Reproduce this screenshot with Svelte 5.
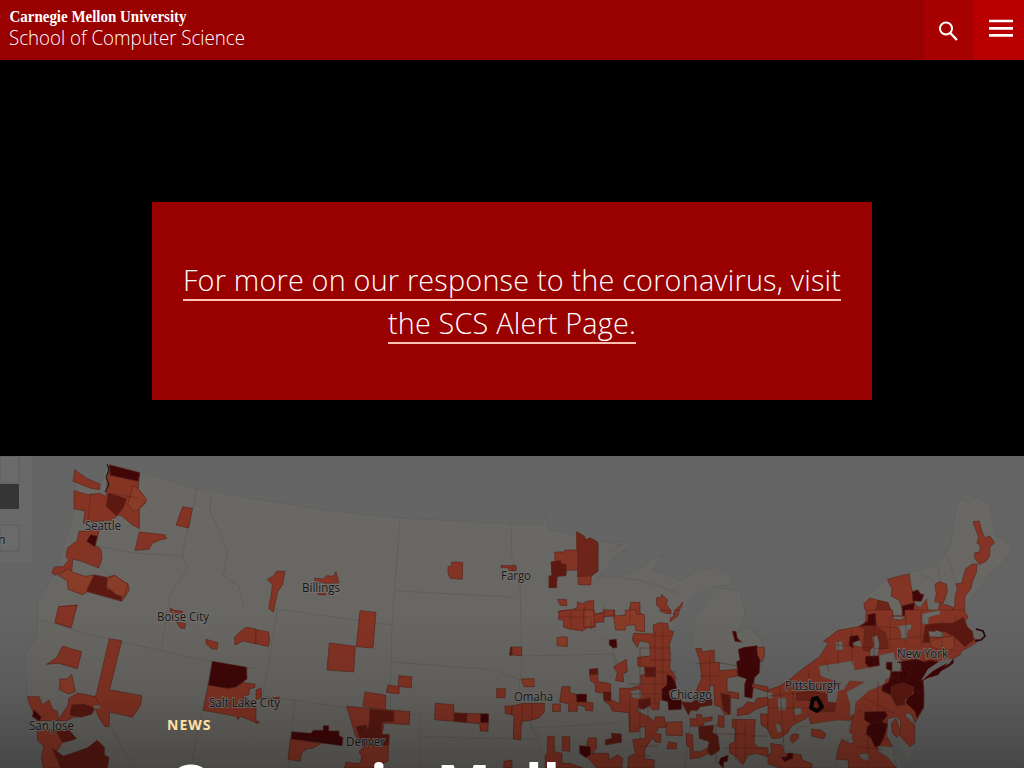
<script>
  const cities = [
    ['Seattle', 85, 530, 36], ['Boise City', 157, 621, 52], ['Billings', 302, 592, 38],
    ['Fargo', 501, 580, 30], ['San Jose', 29, 730, 45], ['Salt Lake City', 209, 707, 71],
    ['Denver', 346, 746, 39], ['Omaha', 514, 701, 39], ['Chicago', 670, 699, 42],
    ['Pittsburgh', 785, 690, 55], ['New York', 897, 658, 51]
  ];

  // Each tile has its own origin; shapes use thirds of a map unit.
  // Tones: a = light, b = medium, c = deep, d = darkest, w = land, s = water.
  const tiles = [
    { x: 0, y: 0, shapes: [
      ['b', '225,40 235,50 262,68 300,84 298,101 270,96 219,76'],
      ['b', '326,30 418,52 415,100 436,128 436,142 418,158 418,218 398,207 365,180 355,176 334,194 294,196 250,202 255,165 222,158 222,104 265,116 300,112 318,122'],
      ['c', '326,112 379,128 370,155 350,180 318,150'],
      ['a', '400,88 416,100 441,132 426,148 418,160 400,165 383,145'],
      ['d', '328,26 419,50 415,76 331,58'],
      ['b', '548,152 577,157 566,216 528,207'],
      ['b', '418,228 494,236 500,248 482,251 457,262 447,280 405,283'],
      ['b', '237,226 298,222 286,268 303,280 306,308 296,336 245,316 218,309 215,351 202,340 166,358 155,350 163,333 189,332 207,312 198,302 202,276 218,264 232,254'],
      ['d', '272,236 292,240 284,272 260,256'],
      ['a', '205,337 219,349 255,361 282,357 321,364 341,358 384,384 388,402 365,436 262,407 247,416 204,400 202,375 175,358'],
      ['c', '282,357 321,366 320,398 365,416 365,434 260,405'],
      ['a', '322,369 345,358 384,386 372,424 349,416 320,391'],
      ['b', '177,452 232,447 218,490 210,515 166,500'],
      ['b', '512,456 522,464 548,466 540,471 510,468']
    ] },
    { x: 0, y: 154, shapes: [
      ['b', '176,-10 230,-14 214,53 164,38'],
      ['b', '188,108 245,125 232,176 176,160 140,163 170,143'],
      ['a', '215,194 226,244 206,252 178,239 180,207 201,207'],
      ['b', '328,86 365,92 329,239 425,257 422,285 397,322 329,306 327,350 315,350 294,318 284,290 281,265 290,250'],
      ['b', '82,260 117,260 128,284 147,270 158,298 172,304 176,328 204,285 207,264 234,249 286,260 298,284 260,316 220,322 200,332 110,332 92,290'],
      ['c', '215,285 251,282 285,294 276,312 243,322 210,315'],
      ['w', '278,288 300,284 300,296 282,296'],
      ['d', '102,299 124,322 118,332 97,320'],
      ['b', '112,360 206,360 229,386 187,398 170,425 184,474 130,474 124,440 132,410 112,390'],
      ['c', '170,365 208,361 228,386 187,397'],
      ['c', '157,415 190,438 210,432 263,413 291,391 313,411 313,434 327,443 322,474 182,474'],
      ['b', '530,36 557,41 554,56 540,53'], ['b', '618,88 654,98 651,118 635,116 618,101'],
      ['b', '625,224 685,235 708,231 728,218 765,222 765,232 748,238 747,253 730,260 768,278 768,338 722,319 714,329 709,319 610,301'],
      ['d', '637,154 740,172 741,207 708,231 681,235 625,225'],
      ['b', '720,65 737,52 768,57 768,102 730,93 705,105 704,82'],
      ['b', '514,0 548,5 545,12 515,7']
    ] },
    { x: 256, y: 0, shapes: [
      ['b', '62,345 87,346 80,385 65,408 52,468 38,458 47,407 49,386 34,370 52,360'],
      ['b', '176,366 202,369 212,359 232,361 240,347 249,381 207,382 176,374'],
      ['b', '185,411 210,412 208,417 187,416'],
      ['b', '587,318 620,319 619,370 583,367 576,352 576,332 586,331'],
      ['b', '735,328 780,330 780,343 760,344 755,335 735,335']
    ] },
    { x: 256, y: 154, shapes: [
      ['b', '312,2 360,7 351,114 301,110'], ['b', '220,99 298,109 293,186 213,180'],
      ['b', '0,59 38,66 41,91 37,110 0,101'], ['b', '429,197 467,200 466,234 426,229'],
      ['b', '396,225 430,230 429,252 391,247'], ['b', '327,246 390,256 388,300 321,288'],
      ['b', '272,289 462,305 459,344 385,339 378,374 399,374 396,454 350,474 265,474 270,457 312,461 318,440 309,425 322,412 298,376'],
      ['c', '342,298 414,304 413,335 378,335 376,377 330,372 340,342'],
      ['c', '300,350 330,345 335,372 399,374 398,405 320,410'],
      ['d', '107,365 165,370 172,361 202,361 202,347 218,347 218,363 249,363 249,377 261,383 258,407 105,387'],
      ['b', '103,387 194,401 170,415 151,417 136,432 133,454 96,448'],
      ['b', '538,280 593,284 593,309 697,312 696,364 673,363 671,341 592,334 536,329'],
      ['c', '594,309 633,311 632,337 594,333'], ['d', '674,312 697,312 697,338 674,338'],
      ['b', '722,236 748,236 747,263 722,263'], ['b', '747,288 768,288 768,314 748,311'],
      ['b', '744,454 768,450 768,474 743,474'], ['c', '764,111 768,111 768,136 760,136'],
      ['b', '0,240 15,234 17,266 70,262 70,268 16,264 0,268'], ['b', '0,332 12,338 0,340']
    ] },
    { x: 512, y: 0, shapes: [
      ['b', '193,228 216,240 222,253 233,246 258,259 258,345 238,360 236,387 199,386 197,342 163,343 161,358 136,361 133,395 111,395 111,360 120,359 117,318 129,318 128,288 155,288 160,282 194,282'],
      ['m', '196,228 216,241 221,252 237,246 258,260 257,346 238,359 198,362'],
      ['c', '118,318 146,313 146,321 163,326 162,359 134,361 133,395 111,395 112,361 120,360'],
      ['b', '136,430 164,431 164,449 145,448'], ['b', '0,328 12,330 12,343 0,343'],
      ['b', '434,425 448,424 449,415 466,431 464,447 477,463 476,474 451,463 434,448'],
      ['b', '512,438 510,450 494,474 483,477 493,459 504,449'],
      ['b', '140,465 180,461 196,454 196,437 210,443 226,435 245,434 245,475 308,462 308,480 145,480'],
      ['b', '356,439 384,439 384,470 397,480 352,480']
    ] },
    { x: 512, y: 154, shapes: [
      ['b', '140,5 170,0 246,0 250,15 274,8 274,0 306,0 306,17 275,20 274,35 250,38 250,51 220,55 212,63 170,57 154,50 155,31 140,28'],
      ['a', '215,0 245,0 247,50 215,52'],
      ['a', '305,18 340,16 340,0 374,0 374,13 397,14 398,65 371,62 370,45 342,46 340,60 311,60'],
      ['a', '135,84 150,80 166,82 166,110 135,107'], ['b', '0,111 29,111 29,137 0,135'],
      ['a', '28,207 66,206 67,230 37,230'], ['d', '292,90 313,88 315,112 304,114 292,105'],
      ['b', '365,70 425,72 424,45 442,38 467,40 470,60 485,65 472,105 475,130 474,175 490,200 490,240 465,245 469,269 442,270 441,298 422,300 410,286 393,298 378,290 378,305 410,321 428,334 430,320 457,321 462,352 440,353 430,370 447,373 446,398 429,396 423,382 407,405 398,418 398,446 427,450 426,474 347,474 350,440 370,430 362,389 400,385 400,350 382,352 380,365 353,366 350,308 301,303 294,286 276,273 275,250 251,246 249,220 235,212 232,178 257,176 258,214 296,222 296,270 323,280 323,235 355,235 388,225 386,196 400,192 397,170 377,168 377,142 415,138 413,98 383,92 376,112 361,90'],
      ['w', '355,243 385,238 390,255 385,266 360,263'],
      ['d', '465,193 480,200 488,215 494,235 470,242 474,262 508,270 508,298 470,300 468,275 450,270 450,236 465,225'],
      ['c', '399,172 430,172 430,200 400,200'], ['c', '380,270 415,265 415,284 395,298 380,290'],
      ['c', '233,178 257,176 257,192 233,194'], ['c', '275,246 296,246 296,274 276,270'],
      ['b', '305,170 343,148 346,186 332,190 335,215 310,212 316,190'],
      ['b', '150,230 174,230 174,248 196,254 222,254 222,276 243,279 242,303 220,301 220,290 196,284 196,304 170,304 170,281 143,276'],
      ['d', '193,253 224,253 223,276 195,276'],
      ['b', '0,288 33,280 97,280 97,305 82,323 52,332 28,334 26,389 4,387 6,315 0,314'],
      ['a', '122,282 145,282 145,304 122,304'], ['b', '151,380 173,380 173,424 151,422'],
      ['b', '107,379 127,379 127,425 150,430 150,460 174,460 212,474 100,474 100,435 106,430'],
      ['b', '230,383 253,384 254,415 240,430 290,430 292,450 316,434 332,445 330,474 255,474 225,440 225,396'],
      ['d', '203,407 235,410 235,434 222,443 203,430'], ['c', '298,370 328,372 328,397 280,405 280,390 300,385'],
      ['a', '463,337 510,335 511,377 463,375'], ['b', '470,395 494,400 493,417 465,416'],
      ['b', '551,115 569,116 570,126 607,120 607,157 622,158 622,182 675,178 676,198 645,204 645,238 656,260 655,313 638,314 625,290 608,286 605,225 594,228 592,245 550,248 560,224 569,205 564,155'],
      ['d', '661,64 672,64 676,85 689,96 669,94'],
      ['d', '679,118 697,112 735,107 736,124 745,136 742,188 727,204 720,265 698,260 698,222 704,207 678,198 674,155 684,150'],
      ['a', '735,112 757,112 757,140 748,156 736,135'],
      ['b', '652,244 680,250 680,266 650,262'], ['b', '720,221 768,231 768,246 721,232'],
      ['c', '508,276 538,278 550,270 600,268 600,285 565,290 555,302 536,300 530,315 520,298'],
      ['c', '626,250 654,256 652,313 635,300'],
      ['b', '534,326 554,326 554,313 570,315 570,325 600,320 600,331 576,337 574,347 536,349'],
      ['b', '620,317 636,318 636,352 617,350'],
      ['b', '676,298 694,290 706,275 726,280 735,265 768,262 768,285 732,298 710,312 676,317'],
      ['b', '661,328 730,329 726,399 737,412 768,414 768,440 730,430 708,436 692,464 669,437 652,428 653,402 668,396 670,356 661,352'],
      ['b', '746,311 768,313 768,358 747,344'],
      ['c', '560,350 605,346 602,368 618,378 623,420 598,437 585,425 592,395 562,385'],
      ['b', '522,370 541,374 544,425 566,425 585,415 590,430 562,443 535,446 534,415 524,405'],
      ['d', '626,444 649,436 645,455 635,455 634,474 620,460'],
      ['b', '442,0 475,2 474,12 455,8'], ['b', '488,0 502,0 498,18 474,35 475,24 488,17']
    ] },
    { x: 768, y: 0, shapes: [
      ['b', '615,197 634,195 641,225 651,246 665,240 680,260 666,273 665,300 653,317 633,325 619,304 621,290 635,289 637,270 626,260 632,244'],
      ['b', '627,325 625,350 614,374 608,400 591,420 590,480 553,480 555,458 560,450 562,416 568,400 565,383 581,382 592,340 612,324'],
      ['b', '358,370 424,353 429,390 437,420 439,445 457,455 475,430 480,462 457,480 320,480 290,460 288,442 305,426 360,440 374,480 403,480 402,456 393,432 370,421 372,398'],
      ['m', '330,434 360,440 376,480 320,480'], ['d', '432,408 449,401 458,414 468,416 460,436 435,435'],
      ['d', '402,450 440,440 434,480 405,480'],
      ['b', '501,385 514,377 535,384 538,407 526,441 500,437 505,414'],
      ['b', '515,441 554,453 553,480 480,480 482,470 510,467']
    ] },
    { x: 768, y: 154, shapes: [
      ['b', '295,0 374,0 375,28 400,30 410,22 411,0 585,0 600,20 588,40 590,55 612,62 617,85 636,90 604,110 580,124 576,135 545,150 465,212 467,293 453,318 441,338 432,314 416,307 412,320 440,345 440,398 427,411 396,379 398,334 387,319 359,326 356,378 374,410 332,410 328,424 358,442 386,474 242,474 240,450 205,448 212,410 222,389 250,402 258,394 245,370 258,306 250,330 213,332 128,342 120,310 116,325 90,337 68,350 60,368 36,384 12,386 0,360 0,240 35,228 68,206 110,172 154,141 182,98 166,94 210,61 292,46'],
      ['w', '152,168 256,152 260,180 332,168 334,136 377,126 382,148 403,150 402,184 378,184 370,208 356,206 346,224 303,242 263,278 260,310 246,320 246,282 235,246 290,216 245,212 227,240 212,240 204,278 178,276 180,240 220,220 158,199'],
      ['w', '202,97 222,93 226,118 204,123'], ['w', '256,90 279,94 280,113 258,106'],
      ['w', '313,82 327,76 334,101 329,137 307,138 307,120 318,108'],
      ['w', '386,49 429,43 430,56 419,62 418,88 399,86 398,61'],
      ['w', '482,64 502,65 502,60 526,68 524,81 484,79'],
      ['w', '462,12 487,6 515,0 518,12 483,22 480,45 462,40'],
      ['w', '29,263 55,263 55,300 30,301'], ['w', '79,294 100,292 101,312 80,317'], ['w', '0,247 12,247 15,265 0,266'],
      ['w', '22,340 35,344 42,364 28,368'],
      ['m', '320,12 325,50 352,68 361,115 330,116 330,130 286,120 290,55 275,50'],
      ['w', '313,82 327,76 334,101 329,137 307,138 307,120 318,108'],
      ['d', '275,48 300,35 300,14 322,10 324,46'],
      ['d', '293,139 332,138 334,166 302,171 292,160'],
      ['d', '246,79 270,76 274,90 254,98 255,116 243,105'],
      ['d', '370,185 401,185 400,160 387,157 445,147 468,155 490,150 520,158 556,146 556,160 537,173 465,211 468,250 467,291 447,324 441,304 414,279 418,263 437,251 436,231 405,219 369,230 369,256 342,243 343,227 362,217'],
      ['d', '355,157 372,157 372,184 355,176'],
      ['c', '370,230 405,220 435,233 432,251 410,268 409,285 384,286 370,258'],
      ['d', '290,306 352,304 358,318 342,335 359,343 348,382 333,411 321,411 309,384 294,372 298,350 309,342 290,330'],
      ['m', '85,250 132,244 176,252 178,276 205,280 198,306 145,304 129,272 86,270'],
      ['c', '472,45 510,40 556,40 585,22 598,50 612,64 616,91 590,110 560,80 530,64 485,67 484,97 465,97'],
      ['a', '485,85 558,78 560,120 520,120 488,110'],
      ['w', '482,64 502,65 502,60 526,68 524,81 484,79'],
      ['s', '555,146 520,150 480,177 458,213 500,186 545,160'],
      ['b', '371,339 384,325 390,342 398,368 387,382 373,370'],
      ['w', '130,342 210,330 248,333 240,365 256,375 245,390 220,387 204,430 204,474 130,474 103,450 100,434 70,428 34,412 39,397 80,370 94,350 118,350'],
      ['b', '131,357 158,360 174,372 167,387 131,378'], ['b', '72,373 91,373 92,383 75,400 66,390'],
      ['b', '8,400 42,406 50,430 99,434 103,450 132,461 132,474 35,474 0,461 0,436 10,429'],
      ['w', '271,433 302,430 304,452 282,448'], ['w', '330,408 374,410 386,474 359,442 334,425'],
      ['d', '39,441 54,442 60,430 75,430 74,445 50,455']
    ] }
  ];
</script>

<div class="page">
  <header>
    <a class="brand" href="#home" aria-label="Carnegie Mellon University School of Computer Science">
      <svg width="270" height="60">
        <text class="cmu" x="9.5" y="22" textLength="177" lengthAdjust="spacingAndGlyphs">Carnegie Mellon University</text>
        <text class="scs" x="9" y="45" textLength="236" lengthAdjust="spacingAndGlyphs">School of Computer Science</text>
      </svg>
    </a>
    <button class="search" aria-label="Search">
      <svg width="50" height="60" fill="none" stroke="#fff"><circle cx="22" cy="28.5" r="6" stroke-width="2" /><path d="M26.3 33l6.6 7" stroke-width="2.5" /></svg>
    </button>
    <button class="menu" aria-label="Menu">
      <svg width="50" height="60"><path d="M15 21h24M15 28.3h24M15 35.4h24" stroke="#fff" stroke-width="2.7" /></svg>
    </button>
  </header>

  <section class="notice">
    <p><a href="#alert"><span>For more on our response to the coronavirus, visit</span><br /><span>the SCS Alert Page.</span></a></p>
  </section>

  <section class="hero">
    <svg class="map" viewBox="0 0 1024 312" aria-hidden="true">
      <defs>
        <linearGradient id="shade" x2="0" y2="1">
          <stop offset="0" stop-opacity="0" /><stop offset=".5" stop-opacity="0.01" /><stop offset=".75" stop-opacity=".1" /><stop offset="1" stop-opacity=".3" />
        </linearGradient>
      </defs>
      <rect class="s" width="1024" height="312" />
      <path d="M0 0H32V106H0Z" fill="#696969" />
      <path d="M0 0H19V27H0ZM0 69H19V95H0Z" fill="#6b6b6b" stroke="#5d5d5d" />
      <path d="M0 28H19V53H0Z" fill="#353535" />
      <text class="city" x="-2" y="88">n</text>
      <path class="land" d="M75 20L80 28 100 34 103 18 108 6 140 16 197 33 256 43 330 55 400 62 512 68 543 68 545 58 549 74 575 79 600 84 634 87 616 99 598 122 620 121 646 109 650 102 664 99 653 114 682 125 696 115 715 111 733 121 730 129 711 131 740 135 745 157 738 177 748 171 761 181 764 204 752 224 766 233 795 218 835 189 822 177 866 162 863 143 888 122 938 109 951 89 956 54 961 42 968 47 977 41 990 49 995 78 1013 92 1005 105 988 120 968 147 966 167 975 173 981 182 970 192 935 218 924 230 924 248 914 264 901 262 912 275 915 290 908 312H58L42 281 28 250 25 200 37 180 38 146 57 112 66 82 74 55Z" />
      <path class="s" d="M702 134L716 132 708 149 696 161 694 190 702 205 699 225 691 238 681 240 674 225 671 204 672 178 678 158 690 142 Z" />
      <path class="s" d="M890 263L899 262 897 280 910 312H902L890 290Z" />
      <path class="line" d="M197 33L182 100 188 111 170 139 161 195M211 37L210 55 228 96 223 120 239 130 244 151M97 90L135 97 182 100M37 163L90 179 212 206 256 213M110 232L95 240 132 310M212 206L191 312M268 152L392 169 400 62M278 150L263 240 390 258 392 170M295 244L288 312M396 135L512 141M392 206L485 213 500 216 520 224M420 256V312M390 258L420 259M420 281L540 283 530 267 544 300M512 68L511 98 520 129 522 210 518 238M522 200L612 198 630 226M534 272L615 267M591 172L612 190 620 225M938 109L941 130 948 150M948 101L958 135 965 142M690 268L685 312M620 122L640 124 670 134 680 138M750 171L762 185" />
      <path d="M638 92L650 85M600 85l22 4-12 6M940 128l-20-10" class="line" />
      {#each tiles as t}
        <g transform="translate({t.x} {t.y}) scale(.33333)">
          {#each t.shapes as [tone, points]}<polygon class={tone} {points} />{/each}
        </g>
      {/each}
      <path class="county" d="M107 37l32 5M91 37l-3 28M558 161h33v13M571 155v17M585 149v25M604 151v16M630 150v15M652 180h19M640 192h31M650 204h22M652 216h24M628 228h48M630 238h38M640 248h20M640 192v62M655 175v72M663 169v60M640 252v30M648 240v28M630 240v36M695 208l20-2 22 4M710 198v32M700 220h22M716 268v40M702 278h45M736 264v40M750 280h18M745 266v40M725 292h42M780 231l4 60M792 225l2 40M808 214l4 24M825 202l4 14M838 184v24M852 174v35M874 166v42M890 160v34M906 160v28M921 155v32M942 165v35M955 160v25M770 240l38-4M770 252h60M835 189l50 4M870 170l30 2M885 184l45-4M918 190l25-9M900 208l20 18M890 218l30 20M878 230l30 20M865 242l30 16M857 254l30 12M904 198l-10 42M915 202l-14 40M890 213l8 40M878 225v30M866 265l20 4M864 278l25 6M857 290l25 4M868 265v45M522 248v22M532 248v16M640 290h18M635 300h16" />
      <path d="M107 8l2 6-3 7 3 8-4 7" stroke="#101018" fill="none" />
      <path d="M813 243l4-1 2 3 3 6-5 4-6-3z" fill="none" stroke="#080404" stroke-width="4" stroke-linejoin="round" />
      <path d="M976 173l7 2 2 5-4 4-6 1" fill="none" stroke="#250707" stroke-width="1.7" />
      <path d="M947 207l-14 8-9 8 14-4z" fill="#410205" />
      {#each cities as [name, x, y, w]}
        <text class="city" {x} y={y - 456} textLength={w} lengthAdjust="spacingAndGlyphs">{name}</text>
      {/each}
      <rect width="1024" height="312" fill="url(#shade)" />
    </svg>
    <div class="copy">
      <div class="kicker">NEWS</div>
      <h1>Carnegie Mellon</h1>
    </div>
  </section>
</div>

<style>
  :global(body) { margin: 0; overflow: hidden; background: #000; }
  .page { width: 1024px; height: 768px; overflow: hidden; background: #000; color: #fff; font-family: "Open Sans", sans-serif; display: flex; flex-direction: column; }
  header { height: 60px; flex: none; display: flex; background: #900; }
  .brand { flex: 1; }
  header svg { display: block; }
  .cmu { font: 700 16.5px "Liberation Serif", serif; fill: #fff; }
  .scs { font: 300 19.5px "Open Sans", sans-serif; fill: #fff; }
  button { width: 50px; height: 60px; padding: 0; border: 0; }
  .search { background: #a60000; }
  .menu { background: #b80000; }
  .notice { height: 198px; flex: none; width: 720px; margin: 142px auto 56px; background: #900; display: flex; justify-content: center; align-items: center; box-sizing: border-box; }
  .notice p { margin: 0; text-align: center; font-size: 28.8px; line-height: 43px; font-weight: 300; letter-spacing: .2px; white-space: nowrap; }
  .notice a { color: #fff; text-decoration: none; }
  .notice span { border-bottom: 2px solid #ffc0b4; }
  .hero { position: relative; height: 312px; flex: none; overflow: hidden; }
  .map { position: absolute; inset: 0; width: 1024px; height: 312px; }
  .s { fill: #656565; }
  .land { fill: #6a6864; stroke: #5f5e5a; stroke-width: .6; }
  .line { fill: none; stroke: #5a5955; stroke-width: .65; }
  .a, .b, .c, .d, .m { stroke: #54221a; stroke-width: 1.8; }
  .a { fill: #8a3c28; }
  .b { fill: #853424; }
  .m { fill: #6f2519; }
  .c { fill: #5c1911; }
  .d { fill: #410608; }
  .w { fill: #6a6864; stroke: #5b3d32; stroke-width: 1; }
  .county { fill: none; stroke: #551c14; stroke-width: .6; opacity: .7; }
  .city { font: 500 12.3px "Open Sans", sans-serif; fill: #15171b; stroke: #77736e; stroke-width: 1.8px; paint-order: stroke; stroke-linejoin: round; }
  .copy { position: relative; padding: 259px 0 0 168px; }
  .kicker { margin-left: -1px; color: #ffe0a3; font-size: 14px; line-height: 20px; font-weight: 700; letter-spacing: 1px; }
  h1 { margin: 14px 0 0; font-size: 57.6px; line-height: 70px; font-weight: 700; white-space: nowrap; }
</style>
